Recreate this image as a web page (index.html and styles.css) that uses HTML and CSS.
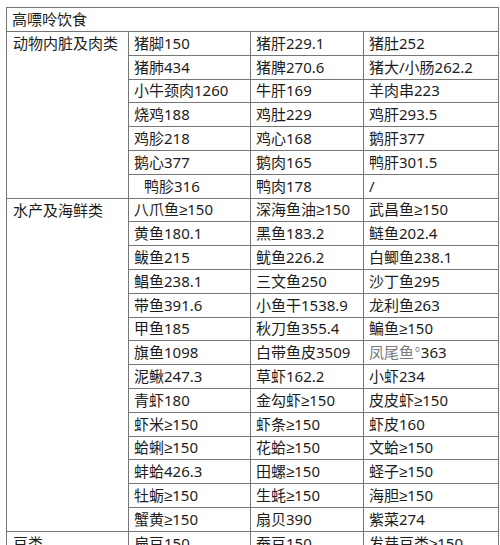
FILE: index.html
```html
<!DOCTYPE html>
<html lang="zh">
<head>
<meta charset="utf-8">
<link rel="stylesheet" href="styles.css">
</head>
<body>
<table class="purine">
  <colgroup>
    <col class="c1"><col class="c2"><col class="c3"><col class="c4">
  </colgroup>
  <tr><td colspan="4">高嘌呤饮食</td></tr>
  <tr><td rowspan="7" class="cat">动物内脏及肉类</td><td>猪脚150</td><td>猪肝229.1</td><td>猪肚252</td></tr>
  <tr><td>猪肺434</td><td>猪脾270.6</td><td>猪大/小肠262.2</td></tr>
  <tr><td>小牛颈肉1260</td><td>牛肝169</td><td>羊肉串223</td></tr>
  <tr><td>烧鸡188</td><td>鸡肚229</td><td>鸡肝293.5</td></tr>
  <tr><td>鸡胗218</td><td>鸡心168</td><td>鹅肝377</td></tr>
  <tr><td>鹅心377</td><td>鹅肉165</td><td>鸭肝301.5</td></tr>
  <tr><td><span class="indent">鸭胗316</span></td><td>鸭肉178</td><td>/</td></tr>
  <tr><td rowspan="14" class="cat">水产及海鲜类</td><td>八爪鱼≥150</td><td>深海鱼油≥150</td><td>武昌鱼≥150</td></tr>
  <tr><td>黄鱼180.1</td><td>黑鱼183.2</td><td>鲢鱼202.4</td></tr>
  <tr><td>鲅鱼215</td><td>鱿鱼226.2</td><td>白鲫鱼238.1</td></tr>
  <tr><td>鲳鱼238.1</td><td>三文鱼250</td><td>沙丁鱼295</td></tr>
  <tr><td>带鱼391.6</td><td>小鱼干1538.9</td><td>龙利鱼263</td></tr>
  <tr><td>甲鱼185</td><td>秋刀鱼355.4</td><td>鳊鱼≥150</td></tr>
  <tr><td>旗鱼1098</td><td>白带鱼皮3509</td><td><span class="muted">凤尾鱼<sup class="mark">o</sup></span>363</td></tr>
  <tr><td>泥鳅247.3</td><td>草虾162.2</td><td>小虾234</td></tr>
  <tr><td>青虾180</td><td>金勾虾≥150</td><td>皮皮虾≥150</td></tr>
  <tr><td>虾米≥150</td><td>虾条≥150</td><td>虾皮160</td></tr>
  <tr><td>蛤蜊≥150</td><td>花蛤≥150</td><td>文蛤≥150</td></tr>
  <tr><td>蚌蛤426.3</td><td>田螺≥150</td><td>蛏子≥150</td></tr>
  <tr><td>牡蛎≥150</td><td>生蚝≥150</td><td>海胆≥150</td></tr>
  <tr><td>蟹黄≥150</td><td>扇贝390</td><td>紫菜274</td></tr>
  <tr><td class="cat">豆类</td><td>扁豆150</td><td>蚕豆150</td><td>发芽豆类≥150</td></tr>
</table>
</body>
</html>
```

FILE: styles.css
```css
html, body {
  margin: 0;
  padding: 0;
  background: #ffffff;
}
body {
  padding: 7px 0 0 6px;
  overflow: hidden;
  height: 545px;
  box-sizing: border-box;
}
.purine {
  border-collapse: collapse;
  table-layout: fixed;
  width: 492px;
  font-family: "Noto Sans", "Liberation Sans", "Noto Sans CJK SC", sans-serif;
  font-size: 15px;
  color: #1c1c1c;
}
.c1 { width: 122px; }
.c2 { width: 122px; }
.c3 { width: 113px; }
.c4 { width: 135px; }
.purine tr { height: 23.8px; }
.purine tr:first-child { height: 24px; }
.purine td {
  border: 1px solid #767676;
  padding: 0 0 0 5px;
  line-height: 21px;
  height: 21.8px;
  white-space: nowrap;
  vertical-align: middle;
  overflow: hidden;
}
.purine td.cat {
  vertical-align: top;
  padding-left: 6px;
  padding-top: 1px;
}
.indent { padding-left: 10px; }
.muted { color: #7a7a7a; }
.mark {
  font-size: 8px;
  vertical-align: 6px;
  line-height: 0;
  margin: 0 1px;
}
```
